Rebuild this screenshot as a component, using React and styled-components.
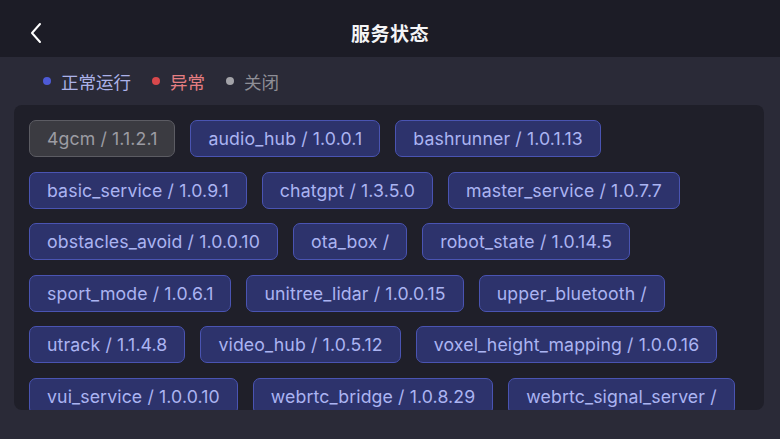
import React from "react";
import styled, { createGlobalStyle } from "styled-components";

const services = [
  { name: "4gcm", version: "1.1.2.1", state: "off" },
  { name: "audio_hub", version: "1.0.0.1" },
  { name: "bashrunner", version: "1.0.1.13" },
  { name: "basic_service", version: "1.0.9.1" },
  { name: "chatgpt", version: "1.3.5.0" },
  { name: "master_service", version: "1.0.7.7" },
  { name: "obstacles_avoid", version: "1.0.0.10" },
  { name: "ota_box", version: "" },
  { name: "robot_state", version: "1.0.14.5" },
  { name: "sport_mode", version: "1.0.6.1" },
  { name: "unitree_lidar", version: "1.0.0.15" },
  { name: "upper_bluetooth", version: "" },
  { name: "utrack", version: "1.1.4.8" },
  { name: "video_hub", version: "1.0.5.12" },
  { name: "voxel_height_mapping", version: "1.0.0.16" },
  { name: "vui_service", version: "1.0.0.10" },
  { name: "webrtc_bridge", version: "1.0.8.29" },
  { name: "webrtc_signal_server", version: "" },
];

const legend = [
  { label: "正常运行", state: "ok" },
  { label: "异常", state: "error" },
  { label: "关闭", state: "off" },
];

const dotColors = { ok: "#4d5ad6", error: "#d8484c", off: "#a3a3a8" };
const labelColors = { ok: "#acb2e8", error: "#e57e82", off: "#8e8e96" };

const GlobalStyle = createGlobalStyle`
  html, body {
    margin: 0;
    padding: 0;
    background: #2a2a37;
  }
  body {
    font-family: Inter, "Noto Sans CJK SC", sans-serif;
  }
`;

const Screen = styled.div`
  width: 780px;
  height: 439px;
  background: #2a2a37;
  display: flex;
  flex-direction: column;
  overflow: hidden;
`;

const Header = styled.header`
  height: 57px;
  box-sizing: border-box;
  padding-top: 8px;
  flex-shrink: 0;
  background: #1c1c26;
  display: flex;
  align-items: center;
  justify-content: center;
  position: relative;
`;

const BackButton = styled.button`
  position: absolute;
  left: 24px;
  top: 19px;
  width: 24px;
  height: 28px;
  padding: 0;
  border: none;
  background: none;
  display: flex;
  align-items: center;
  justify-content: center;
  cursor: pointer;
`;

const Title = styled.h1`
  margin: 0;
  font-family: "Noto Sans CJK SC", sans-serif;
  font-size: 19px;
  font-weight: 600;
  color: #f4f4f6;
  letter-spacing: 0.5px;
`;

const Legend = styled.div`
  display: flex;
  align-items: center;
  gap: 21px;
  height: 48px;
  padding-left: 43px;
  flex-shrink: 0;
`;

const LegendItem = styled.div`
  display: flex;
  align-items: center;
  gap: 10px;
  font-family: "Noto Sans CJK SC", sans-serif;
  font-size: 17.5px;
  color: ${(p) => labelColors[p.$state]};
`;

const Dot = styled.span`
  width: 8px;
  height: 8px;
  border-radius: 50%;
  background: ${(p) => dotColors[p.$state]};
`;

const Panel = styled.section`
  margin: 0 16px 0 14px;
  height: 305px;
  background: #1f1f29;
  border-radius: 8px;
  padding: 15px;
  box-sizing: border-box;
  overflow: hidden;
  display: flex;
  flex-wrap: wrap;
  align-content: flex-start;
  column-gap: 15px;
  row-gap: 14.5px;
`;

const Tag = styled.div`
  height: 37px;
  box-sizing: border-box;
  padding: 0 17px;
  display: flex;
  align-items: center;
  border-radius: 7px;
  font-size: 17.7px;
  letter-spacing: 0.12px;
  white-space: nowrap;
  border: 1px solid ${(p) => (p.$state === "off" ? "#5c5c63" : "#4a54b2")};
  background: ${(p) => (p.$state === "off" ? "#3b3b41" : "#2d336c")};
  color: ${(p) => (p.$state === "off" ? "#9c9ca3" : "#abb4f2")};
`;

const ChevronLeft = () => (
  <svg width="14" height="22" viewBox="0 0 14 22" fill="none">
    <path
      d="M11 2 L3 11 L11 20"
      stroke="#ffffff"
      strokeWidth="2"
      strokeLinecap="round"
      strokeLinejoin="round"
    />
  </svg>
);

export default function App() {
  return (
    <Screen>
      <GlobalStyle />
      <Header>
        <BackButton aria-label="back">
          <ChevronLeft />
        </BackButton>
        <Title>服务状态</Title>
      </Header>
      <Legend>
        {legend.map((item) => (
          <LegendItem key={item.state} $state={item.state}>
            <Dot $state={item.state} />
            {item.label}
          </LegendItem>
        ))}
      </Legend>
      <Panel>
        {services.map((s) => (
          <Tag key={s.name} $state={s.state || "ok"}>
            {s.name} / {s.version}
          </Tag>
        ))}
      </Panel>
    </Screen>
  );
}
